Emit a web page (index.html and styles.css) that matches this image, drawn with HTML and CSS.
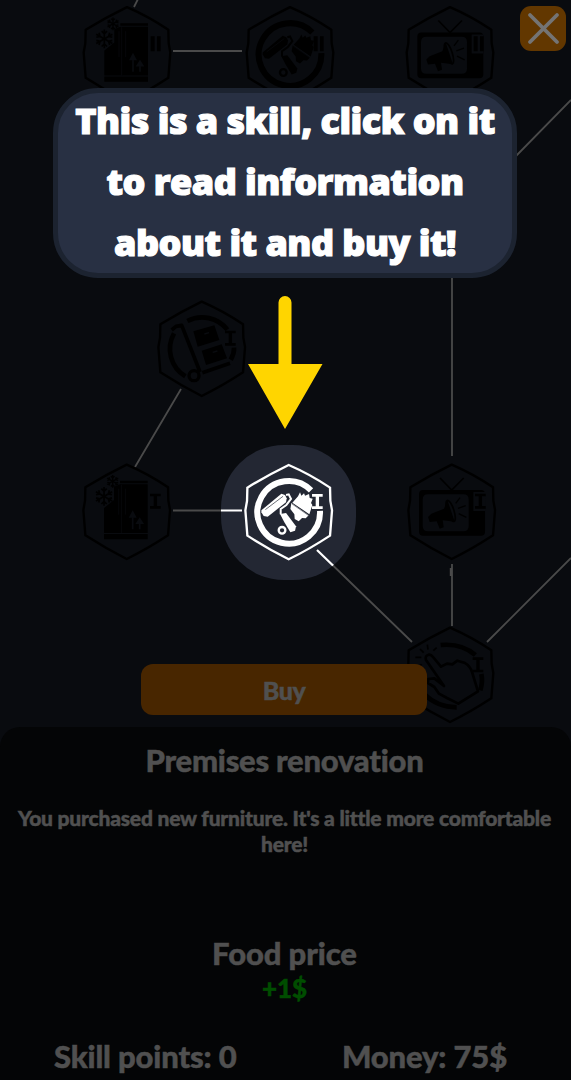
FILE: index.html
```html
<!DOCTYPE html>
<html lang="en">
<head>
<meta charset="utf-8">
<title>Skills</title>
<link rel="stylesheet" href="styles.css">
</head>
<body>
<main class="screen">
  <svg class="tree" viewBox="0 0 571 1080" aria-hidden="true">
    <defs>
      <clipPath id="spot"><rect x="221" y="445" width="135" height="135" rx="63"/></clipPath>
      <path id="hex" class="line" stroke-width="7" d="M0-142Q65-114 124-74L125-34 130-6 124 70Q60 112 0 141Q-62 110-124 70L-130-6-125-34-124-74Q-62-112 0-142Z"/>
      <path id="one" d="M70-55h32v8H91v29h11v8H70v-8h11v-29H70z"/>
      <path id="two" d="M71-55h12v45H71zM90-55h11v45H90z"/>
      <g id="reno">
        <use href="#hex"/>
        <path class="line" stroke-width="18" d="M94-4A94 94 0 1 1 67-66"/>
        <path d="M-82-6L-22-56-11-52-6-42-8-30-63 13-75 11-82 0z"/>
        <path class="cut" stroke-width="2" d="M-70-8L-17-48"/>
        <path class="line" stroke-width="6" d="M-8-52L0-54 7-40-7-22-24-10-24 6"/>
        <path d="M-26 5L-8 2 22 42 19 55 5 60-13 30z"/>
        <circle class="line" stroke-width="7" cx="-20" cy="54" r="10"/>
        <path d="M11-29L28-48 34-60 38-50 46-57 49-50 61-55 63-43 72-41 67-28 71-22 62 6z"/>
        <path d="M8-28L60 9 51 18 40 17 30 27 18 20 17 6 5-10z"/>
        <path class="cut" stroke-width="1.5" d="M10-25L60 10"/>
      </g>
      <g id="flake" class="line">
        <path id="arm" d="M0-28V28M-8-23L0-15 8-23M-8 23L0 15 8 23"/>
        <use href="#arm" transform="rotate(60)"/><use href="#arm" transform="rotate(120)"/>
      </g>
      <g id="fridge">
        <use href="#hex"/>
        <path d="M-20-94H63v8H-20zM-20-83H63V63H-68V-12L-38-36V-76zM-68 66H63V82H-68z"/>
        <path class="cut" stroke-width="2" d="M-16-82V63M-24-70V8M-4-70V8"/>
        <path class="cut" stroke-width="5" d="M18 52V10M39 52V28"/>
        <path class="bg" d="M18-5L30 17H6zM39 16L52 36H26z"/>
        <use href="#flake" stroke-width="5" transform="translate(-68-47)"/>
        <use href="#flake" stroke-width="6" transform="translate(-42-92)scale(.68)"/>
      </g>
      <g id="tv">
        <use href="#hex"/>
        <path class="line" stroke-width="5" d="M-35-102L0-66 36-102"/>
        <path fill-rule="evenodd" d="M-86-66H88Q100-66 100-54V59Q100 71 88 71H-86Q-98 71-98 59V-54Q-98-66-86-66ZM-71-53Q-87-53-87-37V42Q-87 58-71 58H35Q51 58 51 42V-37Q51-53 35-53Z"/>
        <path d="M-71 15L-61 5-23-10-13-36 9 29-27 25-24 46-36 50-45 28-66 30z"/>
        <ellipse class="line" stroke-width="5" cx="-2" cy="-4" rx="10" ry="33" transform="rotate(-18)"/>
        <path class="line" stroke-width="4" d="M12-26L25-43M19-11L42-19M21 5L44 16"/>
        <path class="bg" d="M65-60h35v57H65z"/>
      </g>
    </defs>

    <g class="links">
      <path d="M139-3L134 7M173 51H242M571 100L516 156M452 278V456M181 389L135 467M173 510.500H242M317 550L412 642M452 564V626M450.700 568V576M487 642L571 558"/>
    </g>

    <g class="dim">
      <g transform="translate(127 54.500)scale(.3333)"><use href="#fridge"/><use href="#two"/></g>
      <g transform="translate(290 54.500)scale(.3333)"><use href="#reno"/><use href="#two"/></g>
      <g transform="translate(450 54.500)scale(.3333)"><use href="#tv"/><use href="#two"/></g>
      <g transform="translate(126.700 512)scale(.3333)"><use href="#fridge"/><use href="#one"/></g>
      <g transform="translate(451.700 512)scale(.3333)"><use href="#tv"/><use href="#one"/></g>
      <g transform="translate(201.700 349)scale(.3333)">
        <use href="#hex"/><use href="#one"/>
        <path class="line" stroke-width="14" d="M-43-84A96 96 0 0 1 77-58M97-4Q98 14 87 32M-83-47A96 96 0 0 0-49 82"/>
        <path class="line" stroke-width="11" stroke-linejoin="round" d="M-90-57L-77-68-60-71-5 69M2 71L85 43"/>
        <circle class="line" stroke-width="10" cx="-23" cy="80" r="15"/>
        <path d="M-25-53L38-71 53-27-12-7zM0 5L60-14 76 28 13 48z"/>
        <path class="cut" stroke-width="4" d="M8-45L22-49M33 10L47 6"/>
      </g>
      <g transform="translate(450 675)scale(.3333)">
        <use href="#hex"/>
        <use href="#one" transform="translate(-2 2)"/>
        <path class="line" stroke-width="14" d="M-28-90Q35-96 76-60M94-3Q99 20 91 46M-79 56Q-38 97 20 97"/>
        <path class="line" stroke-width="8" stroke-linejoin="round" d="M-18 33L-72-45Q-76-58-64-61-57-62-51-54L-27-25-9-34 7-32 22-43 43-37Q62-26 67-6L84 49 25 86-9 69-33 56-47 36-66 24-65 12-47 10z"/>
        <path class="line" stroke-width="5" d="M-104-53h18M-90-78l11 11M-68-91l2 15M-40-82l-10 9M-95-25l10-7"/>
      </g>
    </g>

    <rect class="spotlight" x="221" y="445" width="135" height="135" rx="63"/>
    <g clip-path="url(#spot)"><path class="lit-link" d="M221 510.500H242M317 550L412 642"/></g>
    <g class="lit" transform="translate(288.700 512.300)scale(.3333)"><use href="#reno"/><use href="#one"/></g>
  </svg>

  <button class="close" aria-label="Close">
    <svg viewBox="0 0 46 45"><path d="M10 9L37 36M37 9L10 36"/></svg>
  </button>

  <section class="bubble">
    <span>This is a skill, click on it</span>
    <span>to read information</span>
    <span>about it and buy it!</span>
  </section>

  <svg class="arrow" viewBox="0 0 75 133" aria-hidden="true"><path d="M30.500 68V6.500a6.500 6.500 0 0 1 13 0V68H74.500L37 133 0 68z"/></svg>

  <button class="buy">Buy</button>

  <section class="panel">
    <h1 class="title">Premises renovation</h1>
    <p class="desc"><span>You purchased new furniture. It's a little more comfortable</span><span>here!</span></p>
    <h2 class="effect">Food price</h2>
    <p class="gain">+1$</p>
    <footer class="stats"><span>Skill points: 0</span><span>Money: 75$</span></footer>
  </section>
</main>
</body>
</html>
```
FILE: styles.css
```css
* { box-sizing: border-box; }
body { margin: 0; background: #090b0f; }
.screen {
  position: relative;
  width: 571px;
  height: 1080px;
  padding-top: 6px;
  overflow: hidden;
  display: flex;
  flex-direction: column;
  background: #090b0f;
  color: #505050;
  font-family: Lato, "Open Sans", sans-serif;
  font-weight: 900;
  font-variant-ligatures: none;
  white-space: nowrap;
}
.screen > * { position: relative; flex-shrink: 0; }
.screen > .tree { position: absolute; top: 0; left: 0; width: 571px; height: 1080px; }

.line { fill: none; stroke: var(--ink); }
.cut { fill: none; stroke: var(--back); }
.bg { fill: var(--back); }
.dim { --ink: #000; --back: #090b0f; fill: #000; }
.lit { --ink: #fff; --back: #232733; fill: #fff; }
.links { fill: none; stroke: #4a4a4a; stroke-width: 1.8; }
.lit-link { fill: none; stroke: #fff; stroke-width: 2.2; }
.spotlight { fill: #232733; }

button { border: 0; padding: 0; font: inherit; color: inherit; }
.close {
  align-self: flex-end;
  width: 46px;
  height: 45px;
  margin-right: 5px;
  border-radius: 11px;
  background: #623700;
}
.close svg { display: block; width: 46px; height: 45px; fill: none; stroke: #747474; stroke-width: 3.8; stroke-linecap: round; }

.bubble {
  display: flex;
  flex-direction: column;
  align-items: center;
  width: 464px;
  height: 190px;
  margin: 37px 0 0 53px;
  border: 5px solid #1c2330;
  border-radius: 45px;
  background: #283043;
  color: #fff;
  font-family: "Open Sans", sans-serif;
  font-weight: 800;
  font-size: 36px;
  line-height: 61px;
  letter-spacing: -.53px;
  -webkit-text-stroke: 1.2px #fff;
  stroke-linejoin: round;
}
.bubble span { margin-top: -3px; margin-bottom: 3px; }

.arrow { width: 75px; height: 133px; margin: 18px 0 0 248px; fill: #ffd500; }

.buy {
  width: 286px;
  height: 51px;
  margin: 235px 0 0 141px;
  padding-top: 2px;
  border-radius: 12px;
  background: #482600;
  font-size: 25px;
  line-height: 49px;
  letter-spacing: -.4px;
  -webkit-text-stroke: .5px;
}

.panel {
  flex: 1;
  display: flex;
  flex-direction: column;
  align-items: center;
  margin-top: 12px;
  padding-right: 2px;
  border-radius: 20px 20px 0 0;
  background: #040506;
  -webkit-text-stroke: .5px;
}
.panel h1, .panel h2, .panel p { margin: 0; font-weight: 900; }
.panel .title { margin-top: 13px; font-size: 31px; line-height: 40px; letter-spacing: -.25px; }
.panel .desc { display: flex; flex-direction: column; align-items: center; margin-top: 25px; font-size: 21px; line-height: 26px; letter-spacing: -.2px; }
.panel .effect { margin-top: 76px; font-size: 31px; line-height: 40px; letter-spacing: -.1px; }
.panel .gain { color: #004d00; font-size: 26px; line-height: 30px; }
.stats { align-self: stretch; display: flex; justify-content: space-between; margin-top: 33px; padding: 0 62px 0 54px; font-size: 31px; line-height: 40px; letter-spacing: -.15px; }
```
